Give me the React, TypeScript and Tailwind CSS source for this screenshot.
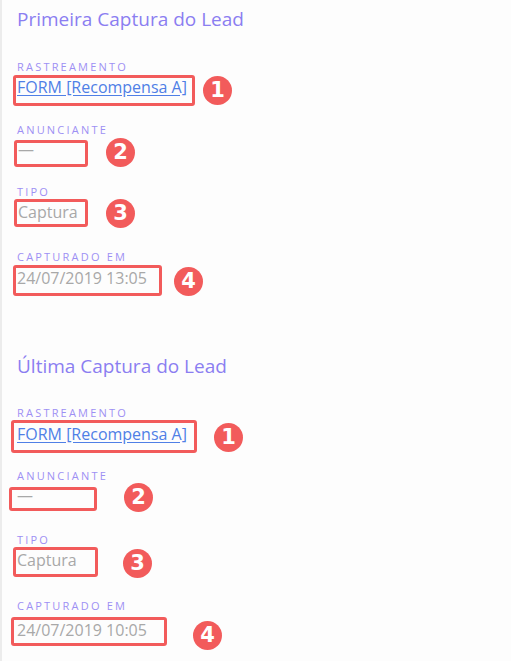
type Field = {
  label: string;
  value: string;
  link?: boolean;
  n: number;
  wrap: string; // spacing above label
  box: string; // box geometry
  text: string; // text offset inside box
  badge: string; // badge offset
};

const first: Field[] = [
  { label: "RASTREAMENTO", value: "FORM [Recompensa A]", link: true, n: 1, wrap: "mt-[27px]", box: "mt-px ml-[-4px] w-[182px] h-[31px]", text: "-mt-px", badge: "ml-[8px] mt-[1px]" },
  { label: "ANUNCIANTE", value: "—", n: 2, wrap: "mt-[17px]", box: "mt-[3px] ml-[-3px] w-[74px] h-[27px]", text: "-mt-[4px]", badge: "ml-[18px]" },
  { label: "TIPO", value: "Captura", n: 3, wrap: "mt-[18px]", box: "-mt-[2px] ml-[-3px] w-[74px] h-[28px]", text: "mt-0", badge: "ml-[18px]" },
  { label: "CAPTURADO EM", value: "24/07/2019 13:05", n: 4, wrap: "mt-[22px]", box: "mt-0 ml-[-4px] w-[149px] h-[31px]", text: "mt-0", badge: "ml-[12px] mt-[3px]" },
];

const last: Field[] = [
  { label: "RASTREAMENTO", value: "FORM [Recompensa A]", link: true, n: 1, wrap: "mt-[26px]", box: "mt-0 ml-[-6px] w-[186px] h-[33px]", text: "mt-[1px] ml-[2px]", badge: "ml-[17px] mt-[2px]" },
  { label: "ANUNCIANTE", value: "—", n: 2, wrap: "mt-[16px]", box: "mt-[3px] ml-[-8px] w-[88px] h-[24px]", text: "-mt-[5px] ml-[4px]", badge: "ml-[27px]" },
  { label: "TIPO", value: "Captura", n: 3, wrap: "mt-[21px]", box: "-mt-[2px] ml-[-4px] w-[85px] h-[30px]", text: "mt-0", badge: "ml-[25px] mt-[2px]" },
  { label: "CAPTURADO EM", value: "24/07/2019 10:05", n: 4, wrap: "mt-[21px]", box: "mt-0 ml-[-6px] w-[156px] h-[29px]", text: "mt-0 ml-[2px]", badge: "ml-[26px] mt-[8px]" },
];

function Badge({ n, className }: { n: number; className: string }) {
  return (
    <div
      className={`flex h-[29px] w-[29px] shrink-0 items-center justify-center rounded-full bg-[#f25b5b] text-[21px] font-bold leading-none text-white ${className}`}
      style={{ fontFamily: '"DejaVu Sans", sans-serif' }}
    >
      {n}
    </div>
  );
}

function Section({ title, fields, className }: { title: string; fields: Field[]; className: string }) {
  return (
    <section className={className}>
      <h2 className="text-[19px] leading-[28px] text-[#8b7ef1]">{title}</h2>
      {fields.map((f) => (
        <div key={f.label} className={f.wrap}>
          <div className="text-[11px] leading-[14px] tracking-[0.2em] text-[#9d90f4]">{f.label}</div>
          <div className="flex items-center">
            <div className={`shrink-0 rounded-[3px] border-[3px] border-[#f25b5b] pl-px ${f.box}`}>
              <div
                className={`whitespace-nowrap text-[16px] leading-[20px] ${f.text} ${
                  f.link ? "text-[#4f7fe6] underline underline-offset-2" : "text-[#a8a8a8]"
                }`}
              >
                {f.value}
              </div>
            </div>
            <Badge n={f.n} className={f.badge} />
          </div>
        </div>
      ))}
    </section>
  );
}

export default function App() {
  return (
    <div
      className="h-[661px] w-[511px] overflow-hidden border-l-2 border-[#ececec] bg-[#fdfdfd] pl-[15px] pt-[5px]"
      style={{ fontFamily: '"Open Sans", sans-serif' }}
    >
      <Section title="Primeira Captura do Lead" fields={first} className="" />
      <Section title="Última Captura do Lead" fields={last} className="mt-[56px]" />
    </div>
  );
}
